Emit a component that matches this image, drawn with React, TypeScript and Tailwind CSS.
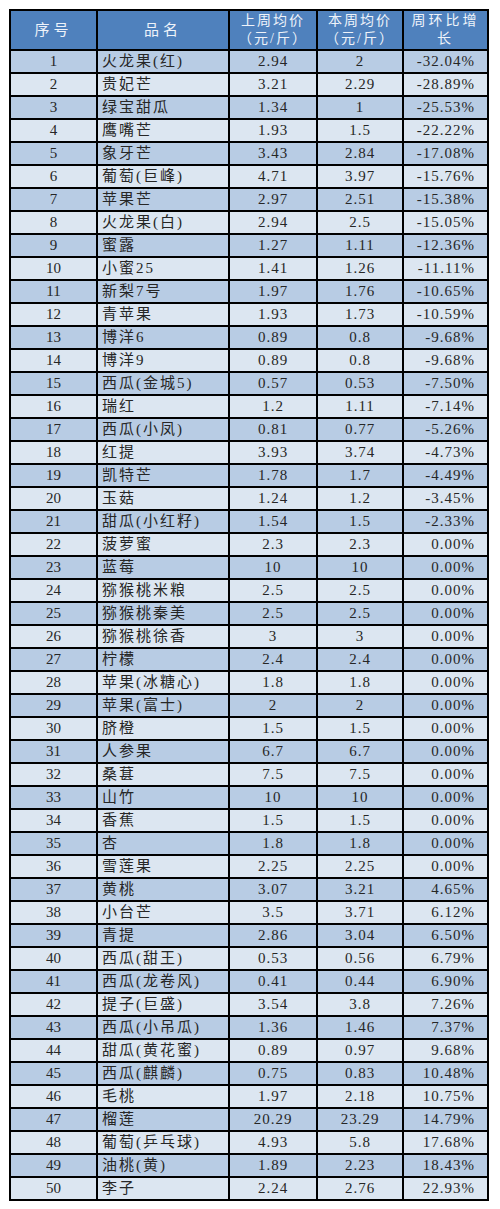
const ROWS: [string, string, string, string][] = [
  ["火龙果(红)", "2.94", "2", "-32.04%"],
  ["贵妃芒", "3.21", "2.29", "-28.89%"],
  ["绿宝甜瓜", "1.34", "1", "-25.53%"],
  ["鹰嘴芒", "1.93", "1.5", "-22.22%"],
  ["象牙芒", "3.43", "2.84", "-17.08%"],
  ["葡萄(巨峰)", "4.71", "3.97", "-15.76%"],
  ["苹果芒", "2.97", "2.51", "-15.38%"],
  ["火龙果(白)", "2.94", "2.5", "-15.05%"],
  ["蜜露", "1.27", "1.11", "-12.36%"],
  ["小蜜25", "1.41", "1.26", "-11.11%"],
  ["新梨7号", "1.97", "1.76", "-10.65%"],
  ["青苹果", "1.93", "1.73", "-10.59%"],
  ["博洋6", "0.89", "0.8", "-9.68%"],
  ["博洋9", "0.89", "0.8", "-9.68%"],
  ["西瓜(金城5)", "0.57", "0.53", "-7.50%"],
  ["瑞红", "1.2", "1.11", "-7.14%"],
  ["西瓜(小凤)", "0.81", "0.77", "-5.26%"],
  ["红提", "3.93", "3.74", "-4.73%"],
  ["凯特芒", "1.78", "1.7", "-4.49%"],
  ["玉菇", "1.24", "1.2", "-3.45%"],
  ["甜瓜(小红籽)", "1.54", "1.5", "-2.33%"],
  ["菠萝蜜", "2.3", "2.3", "0.00%"],
  ["蓝莓", "10", "10", "0.00%"],
  ["猕猴桃米粮", "2.5", "2.5", "0.00%"],
  ["猕猴桃秦美", "2.5", "2.5", "0.00%"],
  ["猕猴桃徐香", "3", "3", "0.00%"],
  ["柠檬", "2.4", "2.4", "0.00%"],
  ["苹果(冰糖心)", "1.8", "1.8", "0.00%"],
  ["苹果(富士)", "2", "2", "0.00%"],
  ["脐橙", "1.5", "1.5", "0.00%"],
  ["人参果", "6.7", "6.7", "0.00%"],
  ["桑葚", "7.5", "7.5", "0.00%"],
  ["山竹", "10", "10", "0.00%"],
  ["香蕉", "1.5", "1.5", "0.00%"],
  ["杏", "1.8", "1.8", "0.00%"],
  ["雪莲果", "2.25", "2.25", "0.00%"],
  ["黄桃", "3.07", "3.21", "4.65%"],
  ["小台芒", "3.5", "3.71", "6.12%"],
  ["青提", "2.86", "3.04", "6.50%"],
  ["西瓜(甜王)", "0.53", "0.56", "6.79%"],
  ["西瓜(龙卷风)", "0.41", "0.44", "6.90%"],
  ["提子(巨盛)", "3.54", "3.8", "7.26%"],
  ["西瓜(小吊瓜)", "1.36", "1.46", "7.37%"],
  ["甜瓜(黄花蜜)", "0.89", "0.97", "9.68%"],
  ["西瓜(麒麟)", "0.75", "0.83", "10.48%"],
  ["毛桃", "1.97", "2.18", "10.75%"],
  ["榴莲", "20.29", "23.29", "14.79%"],
  ["葡萄(乒乓球)", "4.93", "5.8", "17.68%"],
  ["油桃(黄)", "1.89", "2.23", "18.43%"],
  ["李子", "2.24", "2.76", "22.93%"],
];

const FONT = { fontFamily: '"Liberation Serif", "Noto Sans CJK SC", serif' };

export default function App() {
  return (
    <div className="h-[1209px] w-[500px] bg-white pl-[9px] pt-[9px]" style={FONT}>
      <div className="grid w-fit grid-cols-[85px_130px_86px_84px_83px] gap-x-[2px] gap-y-[2px] bg-black p-[2px] text-[15px] text-[#262626]">
        {/* header */}
        <div className="flex h-[38px] items-center justify-center bg-[#4f81bd] tracking-[4px] text-[#eef3fa]">序号</div>
        <div className="flex h-[38px] items-center justify-center bg-[#4f81bd] tracking-[4px] text-[#eef3fa]">品名</div>
        <div className="flex h-[38px] flex-col items-center justify-center bg-[#4f81bd] text-[14px] leading-[18px] tracking-[2px] text-[#eef3fa]">
          <span>上周均价</span>
          <span>（元/斤）</span>
        </div>
        <div className="flex h-[38px] flex-col items-center justify-center bg-[#4f81bd] text-[14px] leading-[18px] tracking-[2px] text-[#eef3fa]">
          <span>本周均价</span>
          <span>（元/斤）</span>
        </div>
        <div className="flex h-[38px] flex-col items-center justify-center bg-[#4f81bd] text-[14px] leading-[18px] tracking-[3px] text-[#eef3fa]">
          <span>周环比增</span>
          <span>长</span>
        </div>

        {ROWS.map(([name, last, cur, pct], i) => {
          const bg = i % 2 === 0 ? "bg-[#b8cce4]" : "bg-[#dce6f1]";
          return [
            <div key={`n${i}`} className={`flex h-[21px] items-center justify-center ${bg}`}>
              {i + 1}
            </div>,
            <div key={`p${i}`} className={`flex h-[21px] items-center pl-[4px] tracking-[2px] ${bg}`}>
              {name}
            </div>,
            <div key={`l${i}`} className={`flex h-[21px] items-center justify-center tracking-[1px] ${bg}`}>
              {last}
            </div>,
            <div key={`c${i}`} className={`flex h-[21px] items-center justify-center tracking-[1px] ${bg}`}>
              {cur}
            </div>,
            <div key={`r${i}`} className={`flex h-[21px] items-center justify-end pr-[12px] tracking-[1px] ${bg}`}>
              {pct}
            </div>,
          ];
        })}
      </div>
    </div>
  );
}
